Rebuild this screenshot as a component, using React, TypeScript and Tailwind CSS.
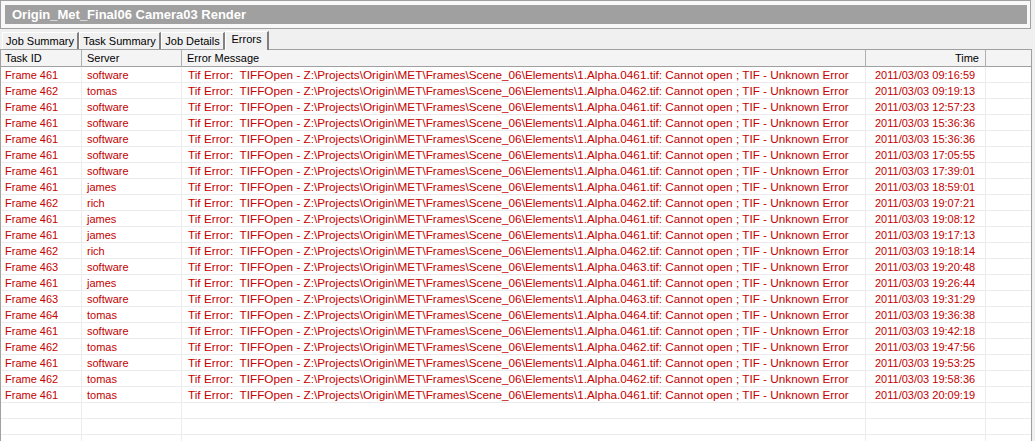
import React from "react";

type Row = { id: string; server: string; frame: string; time: string };

const rows: Row[] = [
  { id: "461", server: "software", frame: "0461", time: "09:16:59" },
  { id: "462", server: "tomas", frame: "0462", time: "09:19:13" },
  { id: "461", server: "software", frame: "0461", time: "12:57:23" },
  { id: "461", server: "software", frame: "0461", time: "15:36:36" },
  { id: "461", server: "software", frame: "0461", time: "15:36:36" },
  { id: "461", server: "software", frame: "0461", time: "17:05:55" },
  { id: "461", server: "software", frame: "0461", time: "17:39:01" },
  { id: "461", server: "james", frame: "0461", time: "18:59:01" },
  { id: "462", server: "rich", frame: "0462", time: "19:07:21" },
  { id: "461", server: "james", frame: "0461", time: "19:08:12" },
  { id: "461", server: "james", frame: "0461", time: "19:17:13" },
  { id: "462", server: "rich", frame: "0462", time: "19:18:14" },
  { id: "463", server: "software", frame: "0463", time: "19:20:48" },
  { id: "461", server: "james", frame: "0461", time: "19:26:44" },
  { id: "463", server: "software", frame: "0463", time: "19:31:29" },
  { id: "464", server: "tomas", frame: "0464", time: "19:36:38" },
  { id: "461", server: "software", frame: "0461", time: "19:42:18" },
  { id: "462", server: "tomas", frame: "0462", time: "19:47:56" },
  { id: "461", server: "software", frame: "0461", time: "19:53:25" },
  { id: "462", server: "tomas", frame: "0462", time: "19:58:36" },
  { id: "461", server: "tomas", frame: "0461", time: "20:09:19" },
];

const tabs = [
  { label: "Job Summary", w: "w-[77px]" },
  { label: "Task Summary", w: "w-[82px]" },
  { label: "Job Details", w: "w-[64px]" },
];

const cols = "grid grid-cols-[81px_100px_684px_120px_1fr]";

function App() {
  return (
    <div className="w-[1035px] h-[441px] overflow-hidden bg-[#f0f0f0] font-['Liberation_Sans',Arial,sans-serif] text-[11px]">
      {/* title frame */}
      <div className="w-[1031px] h-[29px] border border-[#a0a0a0] bg-[#f8f8f8] p-[4px] pr-[3px]">
        <div className="h-full bg-[#a0a0a0] pl-[7px] flex items-center text-white font-bold text-[13px]">
          Origin_Met_Final06 Camera03 Render
        </div>
      </div>

      {/* tabs */}
      <div className="flex items-end h-[19px] mt-[1px] pl-[2px]">
        {tabs.map((t) => (
          <div
            key={t.label}
            className={`${t.w} h-[17px] flex items-center justify-center border-t border-l border-white border-r-2 border-r-[#808080] mt-[2px] whitespace-nowrap`}
          >
            {t.label}
          </div>
        ))}
        <div className="w-[44px] h-[19px] flex items-center justify-center bg-[#f0f0f0] border-t border-l border-white border-r-2 border-r-[#808080] -mb-px relative z-10 pb-[3px]">
          Errors
        </div>
      </div>

      {/* table */}
      <div className="w-[1032px] border-l border-r border-[#a0a0a0] bg-white h-[400px]">
        <div className={`${cols} h-[18px] bg-[#f4f4f4] border-t border-b border-[#a0a0a0] text-black`}>
          <div className="pl-[4px] border-r border-[#b0b0b0] flex items-center">Task ID</div>
          <div className="pl-[5px] border-r border-[#b0b0b0] flex items-center">Server</div>
          <div className="pl-[5px] border-r border-[#b0b0b0] flex items-center">Error Message</div>
          <div className="pr-[6px] border-r border-[#b0b0b0] flex items-center justify-end">Time</div>
          <div />
        </div>
        {rows.map((r, i) => (
          <div key={i} className={`${cols} h-[16px] border-b border-[#ececec] text-[#c40000]`}>
            <div className="pl-[4px] border-r border-[#ececec] flex items-center whitespace-nowrap">Frame {r.id}</div>
            <div className="pl-[5px] border-r border-[#ececec] flex items-center whitespace-nowrap">{r.server}</div>
            <div className="pl-[6px] border-r border-[#ececec] flex items-center whitespace-pre overflow-hidden text-[11.75px]">
              {`Tif Error:  TIFFOpen - Z:\\Projects\\Origin\\MET\\Frames\\Scene_06\\Elements\\1.Alpha.${r.frame}.tif: Cannot open ; TIF - Unknown Error`}
            </div>
            <div className="pl-[9px] border-r border-[#ececec] flex items-center whitespace-nowrap">2011/03/03 {r.time}</div>
            <div />
          </div>
        ))}
        {[0, 1, 2].map((i) => (
          <div key={"e" + i} className={`${cols} h-[16px] border-b border-[#ececec]`}>
            <div className="border-r border-[#ececec]" />
            <div className="border-r border-[#ececec]" />
            <div className="border-r border-[#ececec]" />
            <div className="border-r border-[#ececec]" />
            <div />
          </div>
        ))}
      </div>
    </div>
  );
}

export default App;
